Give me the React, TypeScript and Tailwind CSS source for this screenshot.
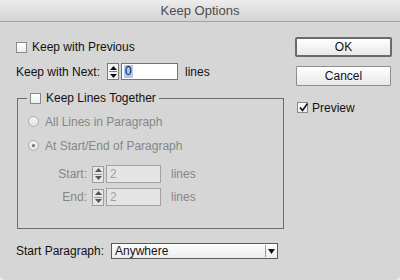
import React from "react";

function Checkbox({ checked = false }: { checked?: boolean }) {
  return (
    <span className="relative w-[11px] h-[11px] shrink-0 border border-[#8a8a8a] bg-linear-to-b from-white to-[#eeeeee] flex items-center justify-center">
      {checked && (
        <svg width="11" height="11" viewBox="0 0 11 11" className="absolute left-[0px] top-[-1px]">
          <path d="M2 5.5 L4.5 8.5 L9.5 1.5" stroke="#111" strokeWidth="1.6" fill="none" />
        </svg>
      )}
    </span>
  );
}

function Radio({ checked = false }: { checked?: boolean }) {
  return (
    <span className="w-[11px] h-[11px] shrink-0 rounded-full border border-[#ababab] bg-linear-to-b from-[#f4f4f4] to-[#e2e2e2] flex items-center justify-center">
      {checked && <span className="w-[3px] h-[3px] rounded-full bg-[#6e6e6e]" />}
    </span>
  );
}

function Spinner({ disabled = false }: { disabled?: boolean }) {
  const c = disabled ? "#9a9a9a" : "#7a7a7a";
  const tri = disabled ? "#555" : "#111";
  return (
    <div
      className={
        "w-[12px] h-[17px] shrink-0 border flex flex-col " +
        (disabled ? "border-[#9c9c9c] bg-[#e6e6e6]" : "border-[#7a7a7a] bg-[#f5f5f5]")
      }
    >
      <div className="flex-1 flex items-center justify-center">
        <svg width="7" height="4" viewBox="0 0 7 4">
          <path d="M3.5 0 L7 4 H0 Z" fill={tri} />
        </svg>
      </div>
      <div className="h-px mx-[1px]" style={{ background: c }} />
      <div className="flex-1 flex items-center justify-center">
        <svg width="7" height="4" viewBox="0 0 7 4">
          <path d="M0 0 H7 L3.5 4 Z" fill={tri} />
        </svg>
      </div>
    </div>
  );
}

export default function App() {
  return (
    <div className="w-[400px] h-[280px] bg-[#ebebeb] font-['Liberation_Sans',Arial,sans-serif] text-[12px] text-[#111] leading-none">
      <div className="w-full h-full bg-[#d6d6d6] rounded-b-[5px] flex flex-col overflow-hidden">
        <div className="h-[22px] shrink-0 border-b border-[#a3a3a3] bg-linear-to-b from-[#ededed] to-[#d3d3d3] flex items-center justify-center text-[13px] text-[#4b4b4b]">
          Keep Options
        </div>
        <div className="flex flex-1">
          {/* Left column */}
          <div className="w-[295px] shrink-0 pl-[16px] pt-[19px] flex flex-col">
            <div className="h-[12px] flex items-center">
              <Checkbox />
              <span className="ml-[5px]">Keep with Previous</span>
            </div>
            <div className="mt-[10px] h-[17px] flex items-center">
              <span className="w-[91px]">Keep with Next:</span>
              <Spinner />
              <div className="ml-[2px] w-[57px] h-[17px] border border-[#3c7fcb] bg-white flex items-center pl-[2px]">
                <span className="bg-[#a9cdf5] px-[1px] leading-[13px]">0</span>
              </div>
              <span className="ml-[7px]">lines</span>
            </div>

            {/* Group box */}
            <div className="relative mt-[18px] ml-[1px] w-[267px] h-[131px] border border-[#6d6d6d] flex flex-col pl-[10px] pt-[16px]">
              <div className="absolute left-[9px] top-[-7px] h-[12px] px-[3px] bg-[#d6d6d6] flex items-center">
                <Checkbox />
                <span className="ml-[5px]">Keep Lines Together</span>
              </div>
              <div className="h-[13px] flex items-center text-[#868686]">
                <Radio />
                <span className="ml-[6px]">All Lines in Paragraph</span>
              </div>
              <div className="mt-[11px] h-[13px] flex items-center text-[#868686]">
                <Radio checked />
                <span className="ml-[6px]">At Start/End of Paragraph</span>
              </div>
              <div className="mt-[13px] -ml-[10px] h-[18px] flex items-center text-[#868686]">
                <span className="w-[69px] text-right">Start:</span>
                <div className="ml-[5px]">
                  <Spinner disabled />
                </div>
                <div className="ml-[2px] w-[55px] h-[18px] border border-[#a2a2a2] bg-[#e4e4e4] flex items-center pl-[3px] text-[#a0a0a0]">
                  2
                </div>
                <span className="ml-[10px]">lines</span>
              </div>
              <div className="mt-[5px] -ml-[10px] h-[18px] flex items-center text-[#868686]">
                <span className="w-[69px] text-right">End:</span>
                <div className="ml-[5px]">
                  <Spinner disabled />
                </div>
                <div className="ml-[2px] w-[55px] h-[18px] border border-[#a2a2a2] bg-[#e4e4e4] flex items-center pl-[3px] text-[#a0a0a0]">
                  2
                </div>
                <span className="ml-[10px]">lines</span>
              </div>
            </div>

            <div className="mt-[14px] h-[16px] flex items-center">
              <span className="w-[95px]">Start Paragraph:</span>
              <div className="w-[167px] h-[16px] border border-[#5a5a5a] bg-linear-to-b from-white to-[#ececec] flex items-center">
                <span className="flex-1 pl-[3px]">Anywhere</span>
                <div className="w-px h-[12px] bg-[#9a9a9a]" />
                <div className="w-[11px] flex items-center justify-center">
                  <svg width="7" height="5" viewBox="0 0 7 5">
                    <path d="M0 0 H7 L3.5 5 Z" fill="#111" />
                  </svg>
                </div>
              </div>
            </div>
          </div>

          {/* Right column */}
          <div className="pt-[15px] flex flex-col">
            <div className="w-[97px] h-[20px] border-2 border-[#6a6a6a] rounded-[2px] bg-linear-to-b from-white to-[#e8e8e8] flex items-center justify-center">
              OK
            </div>
            <div className="mt-[9px] ml-[1px] w-[95px] h-[20px] border border-[#8e8e8e] rounded-[1px] bg-linear-to-b from-white to-[#e8e8e8] flex items-center justify-center">
              Cancel
            </div>
            <div className="mt-[16px] ml-[2px] h-[11px] flex items-center">
              <Checkbox checked />
              <span className="ml-[4px]">Preview</span>
            </div>
          </div>
        </div>
      </div>
    </div>
  );
}
